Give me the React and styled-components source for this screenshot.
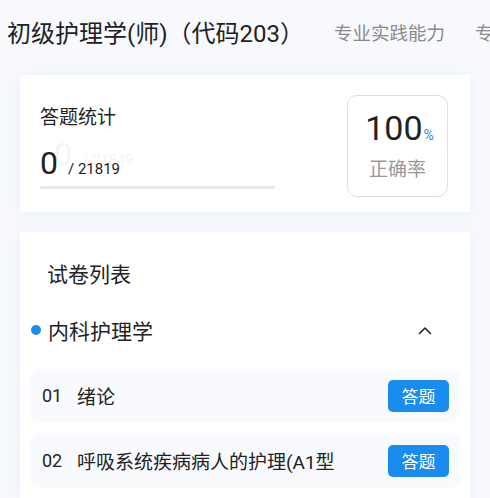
import React from "react";
import styled, { createGlobalStyle } from "styled-components";

const Global = createGlobalStyle`
  html, body { margin: 0; padding: 0; background: #f7f9fd; }
  body { font-family: Roboto, "Noto Sans CJK SC", sans-serif; color: #222; }
  * { box-sizing: border-box; }
`;

const Page = styled.div`
  width: 490px;
  height: 498px;
  overflow: hidden;
  background: #f7f9fd;
`;

const TabBar = styled.div`
  display: flex;
  align-items: center;
  height: 68px;
  padding-left: 7px;
  white-space: nowrap;
  overflow: hidden;
`;

const Tab = styled.div`
  flex: none;
  font-size: ${(p) => (p.$active ? "24px" : "18.5px")};
  color: ${(p) => (p.$active ? "#222" : "#8a8a8a")};
  margin-right: 30px;
  line-height: 1;
`;

const Content = styled.div`
  display: flex;
  flex-direction: column;
  gap: 20px;
  padding: 7px 20px 0;
`;

const Card = styled.div`
  background: #fff;
  box-shadow: 0 2px 12px rgba(180, 200, 235, 0.18);
`;

const StatCard = styled(Card)`
  height: 137px;
  display: flex;
  align-items: flex-start;
  justify-content: space-between;
  padding: 0 22px 0 20px;
`;

const StatLeft = styled.div`
  display: flex;
  flex-direction: column;
  width: 235px;
  margin-top: 31px;
`;

const StatTitle = styled.div`
  font-size: 19px;
  line-height: 24px;
  color: #222;
`;

const CountRow = styled.div`
  position: relative;
  display: flex;
  align-items: baseline;
  margin-top: 15px;
  height: 36px;
`;

const BigNum = styled.span`
  font-size: 32px;
  color: #222;
  line-height: 36px;
`;

const Total = styled.span`
  font-size: 15px;
  color: #222;
  margin-left: 10px;
`;

const Ghost = styled.div`
  position: absolute;
  left: 14px;
  top: -9px;
  display: flex;
  align-items: baseline;
  opacity: 0.045;
  pointer-events: none;
`;

const Bar = styled.div`
  height: 3px;
  background: #e8e8e8;
  margin-top: 5px;
  border-radius: 2px;
`;

const RateBox = styled.div`
  width: 101px;
  height: 102px;
  border: 1px solid #dedede;
  border-radius: 10px;
  display: flex;
  flex-direction: column;
  align-items: center;
  justify-content: center;
  gap: 5px;
  margin-top: 20px;
`;

const RateValue = styled.div`
  font-size: 34px;
  line-height: 36px;
  color: #222;
  padding-left: 4px;
`;

const Percent = styled.span`
  font-size: 14px;
  color: #1a8ae8;
  margin-left: 1px;
`;

const RateLabel = styled.div`
  font-size: 19px;
  line-height: 24px;
  color: #999;
`;

const ListCard = styled(Card)`
  padding: 0 10px 10px;
  display: flex;
  flex-direction: column;
`;

const ListTitle = styled.div`
  font-size: 21px;
  line-height: 28px;
  padding: 29px 0 0 17px;
`;

const Section = styled.div`
  display: flex;
  align-items: center;
  height: 30px;
  margin-top: 26px;
  padding-right: 28px;
`;

const Dot = styled.span`
  width: 10px;
  height: 10px;
  border-radius: 50%;
  background: #1a8cf0;
  margin: 0 7px 0 1px;
  flex: none;
`;

const SectionName = styled.div`
  flex: 1;
  font-size: 21px;
  color: #222;
`;

const Rows = styled.div`
  display: flex;
  flex-direction: column;
  gap: 11px;
  margin-top: 24px;
`;

const Row = styled.div`
  display: flex;
  align-items: center;
  height: ${(p) => p.$h || 53}px;
  padding: 0 11px 0 12px;
  background: #f8fafd;
  border-radius: 10px;
`;

const RowNum = styled.span`
  font-size: 18px;
  color: #222;
  width: 35px;
  flex: none;
`;

const RowName = styled.span`
  flex: 1;
  font-size: 19px;
  color: #222;
  white-space: nowrap;
  overflow: hidden;
`;

const AnswerBtn = styled.button`
  width: 61px;
  height: 32px;
  border: none;
  border-radius: 5px;
  background: #1a8cf0;
  color: #fff;
  font-size: 17px;
  font-family: inherit;
  padding: 0;
  flex: none;
`;

const ChevronUp = () => (
  <svg width="14" height="9" viewBox="0 0 14 9" fill="none">
    <path d="M1.5 7.5 L7 2 L12.5 7.5" stroke="#222" strokeWidth="1.6" strokeLinecap="round" strokeLinejoin="round" />
  </svg>
);

const items = [
  { num: "01", name: "绪论", h: 53 },
  { num: "02", name: "呼吸系统疾病病人的护理(A1型", h: 55 },
];

export default function App() {
  return (
    <Page>
      <Global />
      <TabBar>
        <Tab $active>初级护理学(师)（代码203）</Tab>
        <Tab>专业实践能力</Tab>
        <Tab>专业知识</Tab>
      </TabBar>
      <Content>
        <StatCard>
          <StatLeft>
            <StatTitle>答题统计</StatTitle>
            <CountRow>
              <BigNum>0</BigNum>
              <Total>/ 21819</Total>
              <Ghost>
                <BigNum>0</BigNum>
                <Total>/ 21819</Total>
              </Ghost>
            </CountRow>
            <Bar />
          </StatLeft>
          <RateBox>
            <RateValue>
              100<Percent>%</Percent>
            </RateValue>
            <RateLabel>正确率</RateLabel>
          </RateBox>
        </StatCard>
        <ListCard>
          <ListTitle>试卷列表</ListTitle>
          <Section>
            <Dot />
            <SectionName>内科护理学</SectionName>
            <ChevronUp />
          </Section>
          <Rows>
            {items.map((it) => (
              <Row key={it.num} $h={it.h}>
                <RowNum>{it.num}</RowNum>
                <RowName>{it.name}</RowName>
                <AnswerBtn>答题</AnswerBtn>
              </Row>
            ))}
          </Rows>
        </ListCard>
      </Content>
    </Page>
  );
}
